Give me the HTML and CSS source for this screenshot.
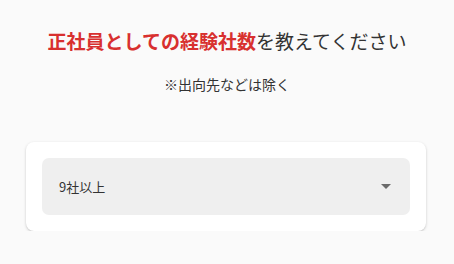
FILE: index.html
```html
<!DOCTYPE html>
<html lang="ja">
<head>
<meta charset="utf-8">
<link rel="stylesheet" href="styles.css">
</head>
<body>
<main class="page">
  <h1 class="title"><span class="accent">正社員としての経験社数</span>を教えてください</h1>
  <p class="note">※出向先などは除く</p>
  <section class="card">
    <div class="select">
      <span class="value">9社以上</span>
      <svg class="caret" width="10" height="5" viewBox="0 0 10 5"><path d="M0 0H10L5 5Z" fill="#6b6b6b"/></svg>
    </div>
  </section>
</main>
</body>
</html>
```
FILE: styles.css
```css
html, body {
  margin: 0;
  padding: 0;
  background: #fafafa;
}
body {
  font-family: "Noto Sans CJK JP", "Noto Sans", sans-serif;
  color: #333;
}
.page {
  display: flex;
  flex-direction: column;
  align-items: stretch;
  padding-top: 27px;
}
.title {
  margin: 0;
  font-size: 19px;
  line-height: 28px;
  font-weight: 400;
  text-align: center;
  color: #333;
}
.accent {
  color: #d8302f;
  font-weight: 700;
}
.note {
  margin: 19px 0 0;
  font-size: 14px;
  line-height: 20px;
  text-align: center;
  color: #333;
}
.card {
  margin: 48px 28px 0 26px;
  background: #fff;
  border-radius: 8px;
  box-shadow: 0 1px 3px rgba(0,0,0,0.18), 0 1px 1px rgba(0,0,0,0.06);
  padding: 16px;
}
.select {
  height: 57px;
  background: #efefef;
  border-radius: 7px;
  display: flex;
  align-items: center;
  justify-content: space-between;
  padding: 0 19px 0 17px;
}
.value {
  font-size: 13px;
  color: #333;
}
.caret {
  display: block;
}
```
